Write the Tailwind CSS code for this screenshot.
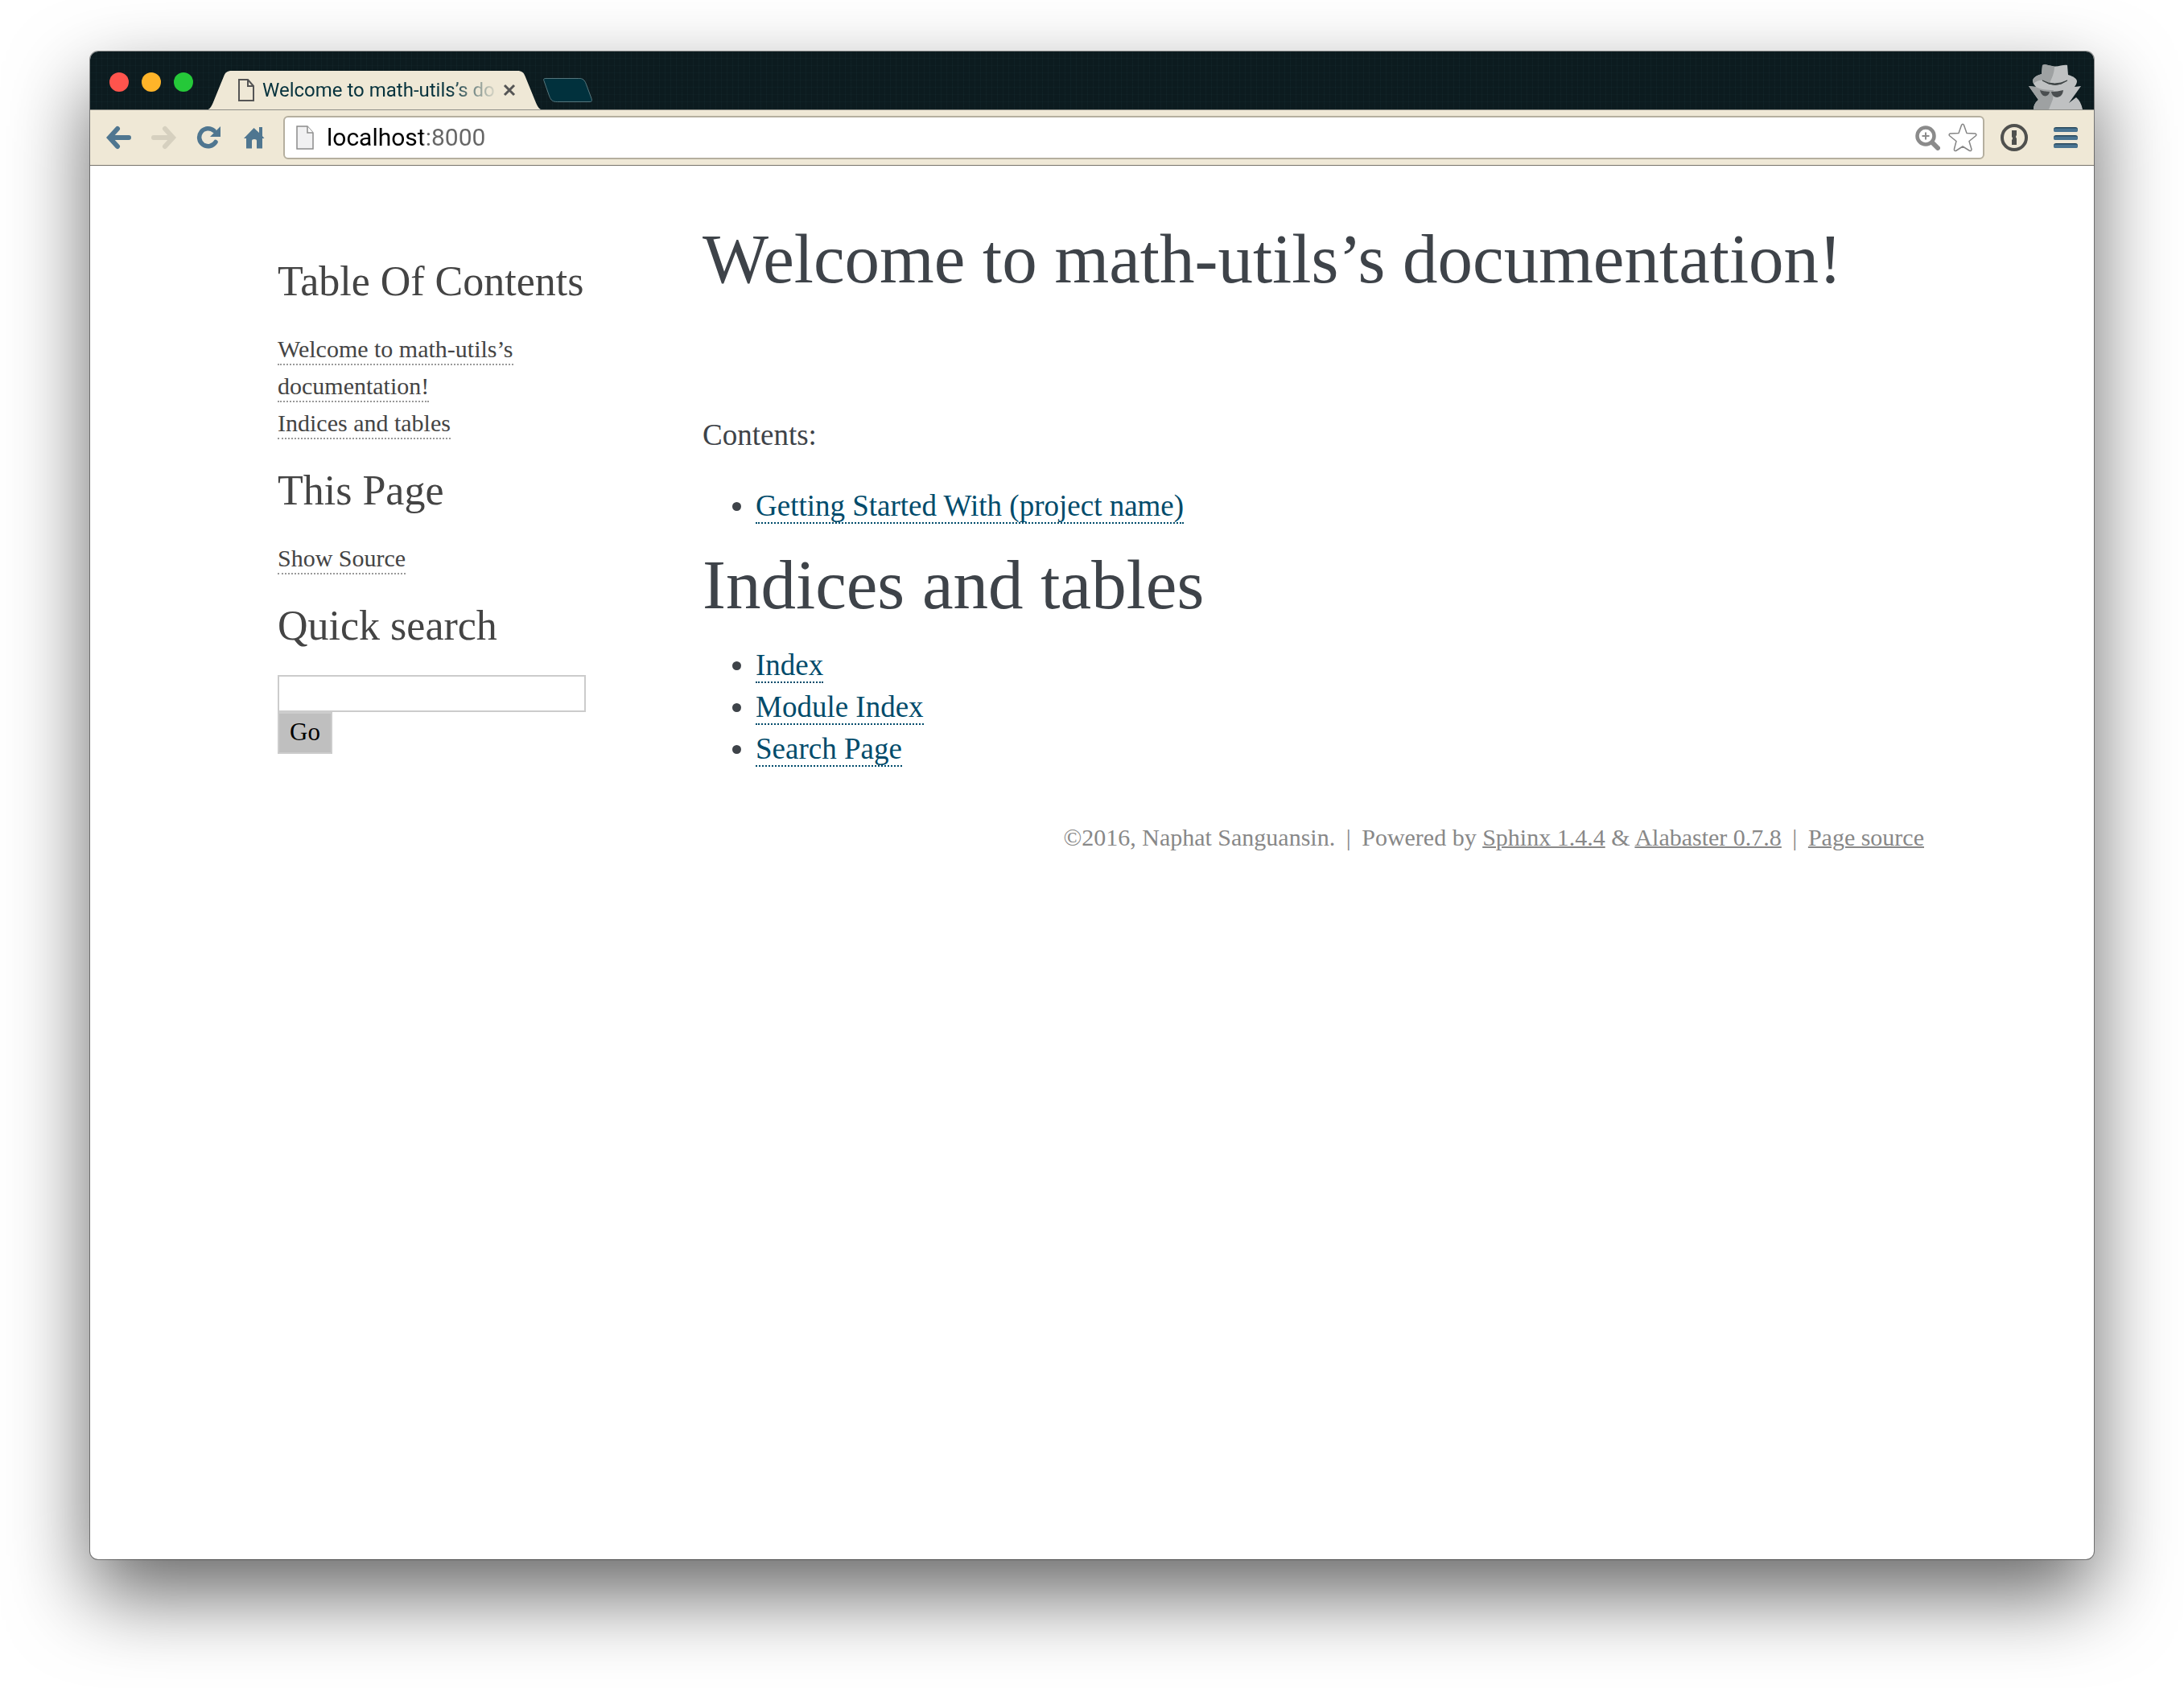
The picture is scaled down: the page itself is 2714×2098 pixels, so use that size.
<!DOCTYPE html>
<html lang="en">
<head>
<meta charset="utf-8">
<title>Welcome to math-utils’s documentation!</title>
<script src="https://cdn.jsdelivr.net/npm/@tailwindcss/browser@4"></script>
</head>
<body class="flex min-h-screen flex-col bg-white px-28 pt-16 pb-40">
<div class="flex grow flex-col rounded-[10px] bg-white shadow-[0_0_0_1px_rgba(0,0,0,0.4),0_44px_100px_rgba(0,0,0,0.6)]">

  <header class="flex flex-col">
    <div class="flex h-[73px] items-end overflow-hidden rounded-t-[10px] border-b border-[#8f8f88] bg-[#0c1b1f] bg-[repeating-linear-gradient(90deg,rgba(80,130,140,0.05)_0_1px,transparent_1px_7px),repeating-linear-gradient(0deg,rgba(80,130,140,0.04)_0_1px,transparent_1px_9px)]">
      <div class="flex gap-4 pb-[22px] pl-6">
        <button aria-label="Close window" class="size-6 rounded-full bg-[#ff544d]"></button>
        <button aria-label="Minimize window" class="size-6 rounded-full bg-[#ffb429]"></button>
        <button aria-label="Zoom window" class="size-6 rounded-full bg-[#25c839]"></button>
      </div>
      <div class="relative -mb-px ml-4 flex h-[50px] items-center pr-[34px] pl-10">
        <svg class="absolute inset-0 h-full w-full" viewBox="0 0 418 50" preserveAspectRatio="none" aria-hidden="true"><path d="M0 50C5 49 7 45 9 40L22 8C24 3 26 1 32 1H386C392 1 394 3 396 8L409 40C411 45 413 49 418 50Z" fill="#efe8d6"/></svg>
        <svg class="relative h-7 w-5 shrink-0" viewBox="0 0 20 28" fill="none" stroke="#555" stroke-width="2" aria-hidden="true"><path d="M1 1H12L19 9V27H1ZM12 1V9H19"/></svg>
        <span class="relative ml-2.5 bg-linear-to-r from-[#06323d] from-80% to-[#06323d]/10 bg-clip-text font-[Roboto,sans-serif] text-2xl leading-8 whitespace-nowrap text-transparent">Welcome to math-utils’s do</span>
        <button aria-label="Close tab" class="relative ml-2.5"><svg class="size-4" viewBox="0 0 16 16" stroke="#555" stroke-width="3"><path d="M2 2L14 14M14 2L2 14"/></svg></button>
      </div>
      <button aria-label="New tab" class="mb-2"><svg class="h-8 w-[62px]" viewBox="0 0 64 32"><path d="M3 1H46C51 1 53 3 55 8L62 27C63 30 62 31 60 31H18C12 31 10 29 8 24L1 4C0 2 1 1 3 1Z" fill="#01313d" stroke="#5b7a80"/></svg></button>
      <svg class="mr-[11px] ml-auto h-14 w-[70px]" viewBox="0 0 70 56" role="img" aria-label="Incognito">
        <path d="M17 1C20 -1 24 1 29 2C36 4 42 0 48 1L49 13C56 15 60 18 60 21C60 24 58 26 57 28L65 27L55 41L50 48L59 41Q65 46 67 56H6Q6 49 12 44L0 27L9 28C7 26 5 23 5 20C6 16 10 14 16 12Z" fill="#bfc1c2"/>
        <path d="M17 1C20 -1 24 1 29 2L32 3C32 10 29 17 26 23L17 20C13 19 8 22 6 24C4 19 6 15 16 12ZM0 27L9 28C14 31 22 32 31 32C29 37 32 39 29 46L25 56H6Q6 49 12 44Z" fill="#9ea1a2"/>
        <path d="M17 20Q32 28 48 20Q33 31 17 20Z" fill="#3e4445" stroke="#3e4445"/>
        <path d="M14 32Q20 34 26 34C25 41 16 42 14 32ZM28 34Q36 34 43 32C42 43 30 44 28 34Z" fill="#4a4e50"/>
      </svg>
    </div>

    <div class="flex h-[69px] items-center border-b border-[#77736a] bg-[#efe8d6] px-5">
      <nav class="flex items-center gap-6" aria-label="Browser">
        <button aria-label="Back"><svg class="size-8" viewBox="0 0 32 32" fill="none" stroke="#4f7690" stroke-width="6" stroke-linecap="round"><path d="M5 16H28M14 5L4 16L14 27"/></svg></button>
        <button aria-label="Forward" disabled><svg class="size-8" viewBox="0 0 32 32" fill="none" stroke="#d6d0bf" stroke-width="6" stroke-linecap="round"><path d="M3 16H26M17 5L27 16L17 27"/></svg></button>
        <button aria-label="Reload"><svg class="size-8" viewBox="0 0 32 32"><path d="M24 21.500A11 11 0 1 1 22 7.500" fill="none" stroke="#4f7690" stroke-width="5.500" stroke-linecap="round"/><path d="M30 2V15H17Z" fill="#4f7690"/></svg></button>
        <button aria-label="Home"><svg class="size-8" viewBox="0 0 32 32"><path d="M3 17L15.500 4L22 10V3H26V14L28.500 17H26V29.500H19V20Q19 18 16 18Q13 18 13 20V29.500H6V17Z" fill="#4f7690"/></svg></button>
      </nav>
      <div class="ml-5 flex h-[54px] grow items-center rounded-md border-2 border-[#b5af9f] bg-white pr-[7px] pl-3.5">
        <svg class="h-[30px] w-[22px] shrink-0" viewBox="0 0 22 30" stroke="#8c8c8c" stroke-width="1.500" aria-hidden="true"><path d="M1 1H14L21 9V29H1Z" fill="#f1f1f2"/><path d="M14 1V9H21" fill="#fff"/></svg>
        <input type="text" aria-label="Address" value="localhost:8000" class="ml-4 min-w-0 grow bg-linear-to-r from-black from-[120px] to-[#666] to-[120px] bg-clip-text font-[Roboto,sans-serif] text-3xl leading-10 text-transparent outline-none">
        <button aria-label="Zoom level"><svg class="size-8" viewBox="0 0 32 32" fill="none" stroke="#8b8b8b"><circle cx="14" cy="14" r="10.500" stroke-width="4.500"/><path d="M23 23L29 29" stroke-width="6" stroke-linecap="round"/><path d="M9.500 14H18.500M14 9.500V18.500" stroke-width="2"/></svg></button>
        <button aria-label="Bookmark this page" class="ml-2.5"><svg class="size-9" viewBox="0 0 36 36" fill="none" stroke="#858585" stroke-width="1.500" stroke-linejoin="round"><path d="M16.500 2.500Q18 0 19.500 2.500L23 12.500L33.500 13Q36 14 34 16L26 22.500L29 32.500Q29 35.500 26 34L18 29L9.500 34.500Q7 35 7.500 32L10 22.500L2 16Q0 14 2.500 13L13 12.500Z"/></svg></button>
      </div>
      <button aria-label="1Password" class="ml-5"><svg class="size-[34px]" viewBox="0 0 34 34"><circle cx="17" cy="17" r="15" fill="none" stroke="#4f504e" stroke-width="4"/><path d="M14 8H20V14Q18 16 20 18V26H14V20Q16 18 14 16Z" fill="#4f504e"/></svg></button>
      <button aria-label="Menu" class="ml-8"><svg class="h-[26px] w-[30px]" viewBox="0 0 30 26"><g fill="#26475b"><rect width="30" height="6" rx="3"/><rect y="10" width="30" height="6" rx="3"/><rect y="20" width="30" height="6" rx="3"/></g><g fill="#4a7491"><rect y="1.500" width="30" height="4.500" rx="2"/><rect y="11.500" width="30" height="4.500" rx="2"/><rect y="21.500" width="30" height="4.500" rx="2"/></g></svg></button>
    </div>
  </header>

  <div class="mx-auto flex w-full max-w-[2068px] font-['Liberation_Serif',serif] text-[37px] leading-[52px] text-[#3e4349]">
    <aside class="w-[550px] shrink-0 pt-[114px] pr-[145px] pl-[22px] text-[30px] leading-[46px] text-[#444]">
      <h3 class="mb-[31px] text-[52px] leading-[60px] whitespace-nowrap">Table Of Contents</h3>
      <ul>
        <li><a href="#welcome" class="border-b-2 border-dotted border-[#999] pb-0.5">Welcome to math-utils’s documentation!</a></li>
        <li><a href="#indices" class="border-b-2 border-dotted border-[#999] pb-0.5">Indices and tables</a></li>
      </ul>
      <h3 class="mt-[31px] mb-[31px] text-[52px] leading-[60px]">This Page</h3>
      <ul>
        <li><a href="#source" class="border-b-2 border-dotted border-[#999] pb-0.5">Show Source</a></li>
      </ul>
      <h3 id="search-title" class="mt-[31px] mb-[31px] text-[52px] leading-[60px]">Quick search</h3>
      <form class="flex flex-col items-start">
        <input type="text" aria-labelledby="search-title" class="h-[46px] w-full border-2 border-[#ccc] px-2 outline-none">
        <button type="submit" class="h-[52px] border-2 border-[#ccc] bg-[#bfbfbf] px-[13px] pb-1 text-[31px] text-black">Go</button>
      </form>
    </aside>

    <main class="min-w-0 grow pt-[66px]">
      <h1 id="welcome" class="mb-[143px] text-[87px] leading-[100px]">Welcome to math-utils’s documentation!</h1>
      <p class="mb-9">Contents:</p>
      <ul class="list-disc pl-[66px]">
        <li><a href="#start" class="border-b-2 border-dotted border-[#004b6b] text-[#004b6b]">Getting Started With (project name)</a></li>
      </ul>
      <h1 id="indices" class="mt-[22px] mb-6 text-[87px] leading-[100px]">Indices and tables</h1>
      <ul class="list-disc pl-[66px]">
        <li><a href="#index" class="border-b-2 border-dotted border-[#004b6b] text-[#004b6b]">Index</a></li>
        <li><a href="#modules" class="border-b-2 border-dotted border-[#004b6b] text-[#004b6b]">Module Index</a></li>
        <li><a href="#search" class="border-b-2 border-dotted border-[#004b6b] text-[#004b6b]">Search Page</a></li>
      </ul>
      <footer class="mt-16 text-right text-[30px] leading-10 text-[#888]">©2016, Naphat Sanguansin. <span class="mx-1.5">|</span> Powered by <a href="#sphinx" class="underline decoration-2">Sphinx 1.4.4</a> &amp; <a href="#alabaster" class="underline decoration-2">Alabaster 0.7.8</a> <span class="mx-1.5">|</span> <a href="#page-source" class="underline decoration-2">Page source</a></footer>
    </main>
  </div>
</div>
</body>
</html>
